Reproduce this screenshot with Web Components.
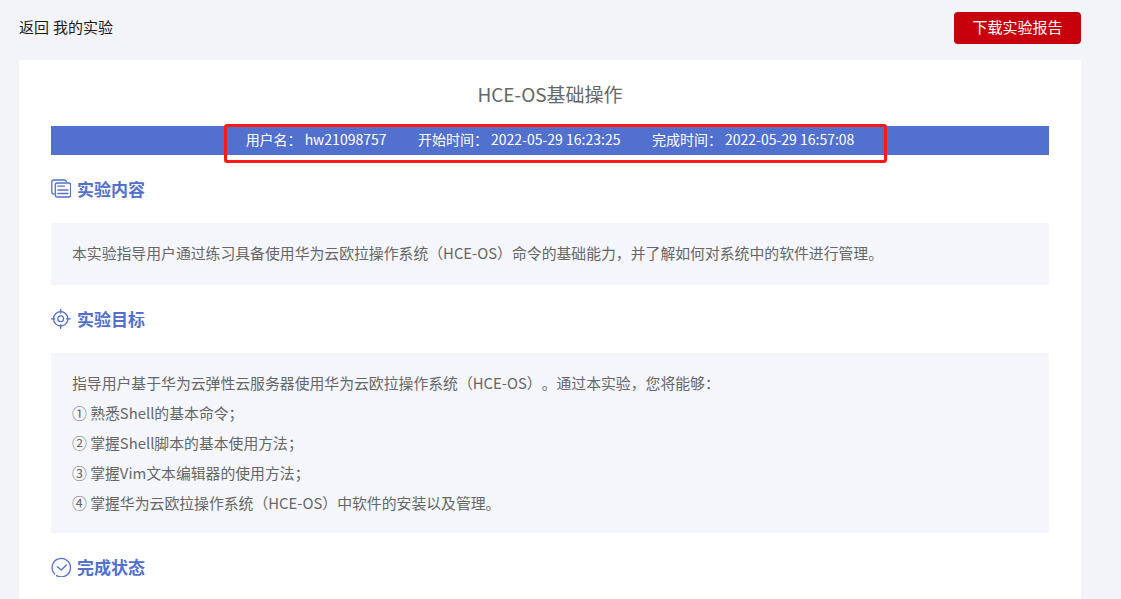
<!DOCTYPE html>
<html lang="zh">
<head>
<meta charset="utf-8">
<title>HCE-OS基础操作</title>
<style>
  html, body { margin: 0; height: 100%; overflow: hidden; }
  body {
    background: #f3f4f7;
    font-family: "Noto Sans CJK SC", "Noto Sans", sans-serif;
    text-spacing-trim: space-all;
  }
</style>
</head>
<body>
<lab-page>
  <lab-topbar></lab-topbar>
  <lab-card>
    <lab-section heading="实验内容" icon="content">
      <p>本实验指导用户通过练习具备使用华为云欧拉操作系统（HCE-OS）命令的基础能力，并了解如何对系统中的软件进行管理。</p>
    </lab-section>
    <lab-section heading="实验目标" icon="target">
      <p>指导用户基于华为云弹性云服务器使用华为云欧拉操作系统（HCE-OS）。通过本实验，您将能够：</p>
      <p>① 熟悉Shell的基本命令；</p>
      <p>② 掌握Shell脚本的基本使用方法；</p>
      <p>③ 掌握Vim文本编辑器的使用方法；</p>
      <p>④ 掌握华为云欧拉操作系统（HCE-OS）中软件的安装以及管理。</p>
    </lab-section>
    <lab-section heading="完成状态" icon="done"></lab-section>
  </lab-card>
</lab-page>

<script>
(function () {
  const icons = {
    content: `<path d="M3 15C1.6 15 .8 14.2 .8 12.8V3.2C.8 1.8 1.6 1 3 1H13C14.4 1 15.2 1.6 15.5 2.8" />
      <rect x="4.3" y="4" width="15.3" height="14" rx="2" />
      <path d="M6.8 7.2H13.5M6.8 11H17M6.8 14.5H17" />`,
    target: `<circle cx="9.7" cy="9.8" r="7.2" />
      <circle cx="9.7" cy="9.8" r="2.9" />
      <path d="M9.7 .3V4M9.7 15.6V19.4M.2 9.8H3.9M15.5 9.8H19.3" />`,
    done: `<path d="M3.6 17A9.2 9.2 0 1 1 5.6 18.6" />
      <path d="M6.3 9.7L10.3 13L15.3 8" />`
  };

  class LabPage extends HTMLElement {
    constructor() {
      super();
      this.attachShadow({ mode: "open" }).innerHTML = `
        <style>
          :host { display: block; padding: 0 40px 0 19px; }
        </style>
        <slot></slot>`;
    }
  }

  class LabTopbar extends HTMLElement {
    constructor() {
      super();
      this.attachShadow({ mode: "open" }).innerHTML = `
        <style>
          :host {
            display: flex;
            justify-content: space-between;
            align-items: center;
            height: 60px;
            padding-bottom: 4px;
            box-sizing: border-box;
            font-size: 15px;
            color: #1a1a1a;
          }
          .crumbs { display: flex; gap: 4px; margin-top: -3px; }
          button {
            width: 127px;
            height: 32px;
            border: 0;
            border-radius: 4px;
            background: #c7000b;
            color: #fff;
            font: inherit;
            padding: 0 0 3px;
          }
        </style>
        <div class="crumbs"><span>返回</span><span>我的实验</span></div>
        <button>下载实验报告</button>`;
    }
  }

  class LabCard extends HTMLElement {
    constructor() {
      super();
      this.attachShadow({ mode: "open" }).innerHTML = `
        <style>
          :host {
            display: block;
            background: #fff;
            padding: 20px 32px 0;
            height: 539px;
            overflow: hidden;
            box-sizing: border-box;
          }
          h1 {
            margin: 0 0 19px;
            font-size: 19px;
            font-weight: 400;
            line-height: 27px;
            text-align: center;
            color: #666;
          }
          .info {
            position: relative;
            display: flex;
            justify-content: center;
            align-items: center;
            gap: 31.5px;
            height: 29px;
            background: #5270cd;
            color: #fff;
            font-size: 14px;
          }
          .info span { margin-top: -3px; }
          .info b { font-weight: 400; margin-left: 3px; }
          .mark {
            position: absolute;
            left: 173px;
            top: -2px;
            width: 657px;
            height: 33px;
            border: 3px solid #fb1b14;
            border-radius: 3px;
          }
        </style>
        <h1>HCE-OS基础操作</h1>
        <div class="info">
          <span>用户名：<b>hw21098757</b></span>
          <span>开始时间：<b>2022-05-29 16:23:25</b></span>
          <span>完成时间：<b>2022-05-29 16:57:08</b></span>
          <div class="mark"></div>
        </div>
        <slot></slot>`;
    }
  }

  class LabSection extends HTMLElement {
    constructor() {
      super();
      this.attachShadow({ mode: "open" }).innerHTML = `
        <style>
          :host { display: block; }
          .head {
            display: flex;
            align-items: center;
            gap: 6px;
            height: 68px;
            font-size: 17px;
            font-weight: 700;
            color: #5270cd;
          }
          .head span { margin-top: -2px; }
          svg {
            width: 20px;
            height: 20px;
            fill: none;
            stroke: #5270cd;
            stroke-width: 1.3;
            stroke-linecap: round;
            stroke-linejoin: round;
          }
          .body {
            background: #f4f6fb;
            padding: 15px 21px;
            font-size: 14.85px;
            line-height: 30px;
            color: #666;
          }
          ::slotted(p) { margin: 0; }
          ::slotted(p:only-child) { margin-bottom: 2px; }
        </style>
        <div class="head"><svg viewBox="0 0 20 20"></svg><span></span></div>
        <div class="body"><slot></slot></div>`;
    }

    connectedCallback() {
      const root = this.shadowRoot;
      root.querySelector("span").textContent = this.getAttribute("heading");
      root.querySelector("svg").innerHTML = icons[this.getAttribute("icon")];
      if (!this.children.length) root.querySelector(".body").remove();
    }
  }

  customElements.define("lab-page", LabPage);
  customElements.define("lab-topbar", LabTopbar);
  customElements.define("lab-card", LabCard);
  customElements.define("lab-section", LabSection);
})();
</script>
</body>
</html>
